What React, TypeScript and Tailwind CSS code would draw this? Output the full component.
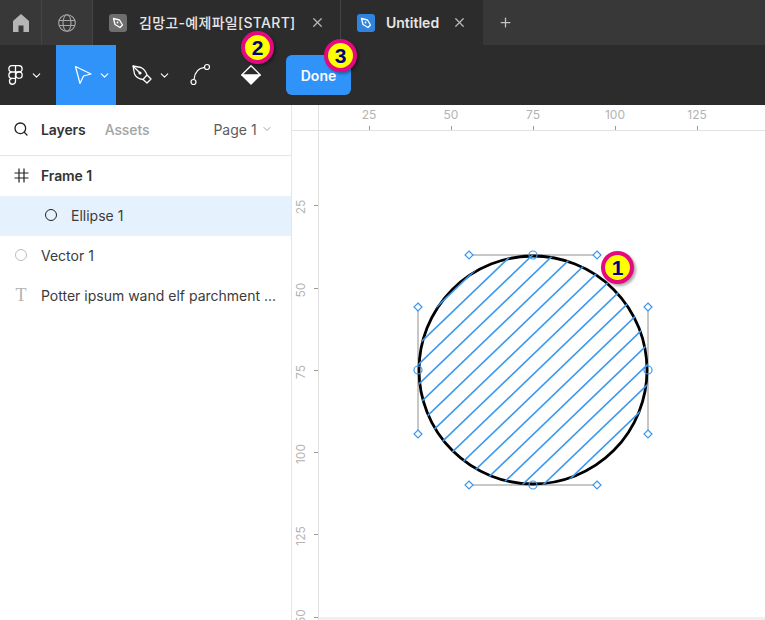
import React from "react";
import { ChevronDown, Plus, Search, X } from "lucide-react";

const sans = "font-['Inter','Noto_Sans_CJK_KR',sans-serif]";

const Badge: React.FC<{ n: number; className: string }> = ({ n, className }) => (
  <div
    className={`absolute z-10 flex h-[33px] w-[33px] items-center justify-center rounded-full border-[4px] border-[#e5097f] bg-[#ffff00] font-['Liberation_Sans',sans-serif] text-[21px] font-bold text-[#000080] shadow-[2px_2px_3px_rgba(0,0,0,0.35)] ${className}`}
  >
    {n}
  </div>
);

const TabIcon: React.FC<{ bg: string }> = ({ bg }) => (
  <span className={`flex h-[18px] w-[18px] items-center justify-center rounded-[3px] ${bg}`}>
    <svg width="14" height="14" viewBox="0 0 14 14" fill="none" stroke="white" strokeWidth="1.3">
      <path d="M2.5 2.5 L8.5 4 L11.5 9 L9 11.5 L4 8.5 Z" strokeLinejoin="round" />
      <circle cx="6.5" cy="6.5" r="0.9" fill="white" stroke="none" />
    </svg>
  </span>
);

const TabBar = () => (
  <div className={`flex h-[45px] bg-[#383838] text-[14px] ${sans}`}>
    <div className="flex w-[42px] items-center justify-center border-r border-[#444]">
      <svg width="16" height="18" viewBox="0 0 16 18" fill="#b5b5b5">
        <path d="M8 0 L16 7 V18 H10.5 V11.5 H5.5 V18 H0 V7 Z" />
      </svg>
    </div>
    <div className="flex w-[50px] items-center justify-center">
      <svg width="18" height="18" viewBox="0 0 18 18" fill="none" stroke="#a8a8a8" strokeWidth="1.1">
        <circle cx="9" cy="9" r="8.3" />
        <ellipse cx="9" cy="9" rx="4" ry="8.3" />
        <path d="M1 6.5H17M1 11.5H17" />
      </svg>
    </div>
    <div className="flex w-[249px] items-center border-x border-[#444] bg-[#2c2c2c] pl-4 text-[#e6e6e6]">
      <TabIcon bg="bg-[#6e6e6e]" />
      <span className="ml-3 font-medium tracking-[0.3px]">김망고-예제파일[START]</span>
      <X size={15} className="ml-[14px] text-[#b8b8b8]" />
    </div>
    <div className="flex w-[142px] items-center bg-[#2c2c2c] pl-4 text-[#e6e6e6]">
      <TabIcon bg="bg-[#2f84e0]" />
      <span className="ml-[11px] font-semibold">Untitled</span>
      <X size={15} className="ml-[13px] text-[#b8b8b8]" />
    </div>
    <div className="flex w-[44px] items-center justify-center">
      <Plus size={15} className="text-[#c4c4c4]" />
    </div>
  </div>
);

const Toolbar = () => (
  <div className="flex h-[60px] items-center bg-[#2c2c2c] text-white">
    <div className="flex w-[56px] items-center pl-2">
      <svg width="15" height="20" viewBox="0 0 15 20" fill="none" stroke="white" strokeWidth="1.3">
        <path d="M7.5 0.7H4a3 3 0 0 0 0 6.3H7.5ZM7.5 0.7H11a3 3 0 0 1 0 6.3H7.5ZM7.5 7H4a3 3 0 0 0 0 6.3H7.5ZM7.5 13.3H4a3 3 0 1 0 3.5 3Z" />
        <circle cx="11" cy="10.1" r="3.2" />
      </svg>
      <ChevronDown size={13} className="ml-[7px]" />
    </div>
    <div className="flex h-full w-[60px] items-center bg-[#3093fa] pl-[17px]">
      <svg width="20" height="20" viewBox="0 0 20 20" fill="none" stroke="white" strokeWidth="1.2">
        <path d="M2.5 1.5 L18 9 L10.5 11 L7 18.5 Z" strokeLinejoin="round" />
      </svg>
      <ChevronDown size={13} className="ml-[5px]" />
    </div>
    <div className="flex w-[70px] items-center pl-[15px]">
      <svg width="22" height="22" viewBox="0 0 22 22" fill="none" stroke="white" strokeWidth="1.3">
        <path d="M2 2 L10 3.5 C13 5 15 8 16 11 L20 15 L16 19 L12 15.5 C8 15 5 13 3.5 10 Z" strokeLinejoin="round" />
        <path d="M2 2 L8.5 8.5M12 15.5 L16 11" />
        <circle cx="9" cy="9" r="1.6" fill="white" stroke="none" />
      </svg>
      <ChevronDown size={13} className="ml-[5px]" />
    </div>
    <svg width="24" height="24" viewBox="0 0 24 24" fill="none" stroke="white" strokeWidth="1.2" className="ml-[4px]">
      <path d="M4 16.5 C4.5 10 8 5 14.7 4.3" />
      <circle cx="3.5" cy="19" r="2.5" />
      <circle cx="17" cy="4" r="2.5" />
    </svg>
    <svg width="20" height="20" viewBox="0 0 20 20" className="ml-[27px]">
      <path d="M10 0.7 L19.3 10 L0.7 10 Z" fill="none" stroke="white" strokeWidth="1.3" strokeLinejoin="round" />
      <path d="M0 10 L20 10 L10 20 Z" fill="white" />
    </svg>
    <button className={`ml-[25px] h-10 w-[65px] rounded-md bg-[#3093fa] text-[14px] font-semibold text-white ${sans}`}>
      Done
    </button>
  </div>
);

const Row: React.FC<{ icon: React.ReactNode; label: string; className?: string }> = ({
  icon,
  label,
  className = "pl-[11px]",
}) => (
  <div className={`flex h-10 items-center pb-[2px] ${className}`}>
    <span className="flex w-[20px] justify-center">{icon}</span>
    <span className="ml-[10px] whitespace-nowrap">{label}</span>
  </div>
);

const LayersPanel = () => (
  <aside className={`h-full w-[292px] shrink-0 border-r border-[#e6e6e6] bg-white text-[14px] text-[#3b3b3b] ${sans}`}>
    <div className="flex h-[51px] items-center border-b border-[#e5e5e5] pb-[2px] pl-[13px]">
      <Search size={16} className="text-[#222]" strokeWidth={2} />
      <span className="ml-3 font-semibold tracking-[-0.1px] text-[#333]">Layers</span>
      <span className="ml-[19px] font-medium tracking-[-0.1px] text-[#a3a3a3]">Assets</span>
      <span className="ml-[64px] text-[#5c5c5c]">Page 1</span>
      <ChevronDown size={12} className="ml-[4px] text-[#a3a3a3]" />
    </div>
    <Row
      label="Frame 1"
      className="pl-[11px] font-semibold tracking-[-0.1px] text-[#333]"
      icon={
        <svg width="15" height="15" viewBox="0 0 15 15" fill="none" stroke="#222" strokeWidth="1.2">
          <path d="M0.5 5H14.5M0.5 10H14.5M5 0.5V14.5M10 0.5V14.5" />
        </svg>
      }
    />
    <Row
      label="Ellipse 1"
      className="bg-[#e5f2fe] pl-[41px]"
      icon={<span className="h-[12px] w-[12px] rounded-full border-[1.5px] border-[#222]" />}
    />
    <Row label="Vector 1" icon={<span className="h-[12px] w-[12px] rounded-full border-[1.5px] border-[#bdbdbd]" />} />
    <Row
      label="Potter ipsum wand elf parchment ..."
      icon={<span className="font-['Liberation_Serif',serif] text-[18px] leading-none text-[#b3b3b3]">T</span>}
    />
  </aside>
);

const xTicks = [
  [77, "25"],
  [159, "50"],
  [241, "75"],
  [323, "100"],
  [405, "125"],
] as const;
const yTicks = [
  [74, "25"],
  [157, "50"],
  [239, "75"],
  [321, "100"],
  [403, "125"],
  [486, "150"],
] as const;

const diamonds = [
  [469, 255],
  [597, 255],
  [418, 307],
  [648, 307],
  [418, 434],
  [648, 434],
  [469, 485],
  [597, 485],
];

// hatch lines sit 20px apart vertically
const hatch = Array.from({ length: 24 }, (_, i) => 283 + i * 20);

const Shape = () => (
  <svg viewBox="319 131 446 486" className="h-full w-full" fill="none">
    <defs>
      <clipPath id="circle">
        <circle cx="533" cy="370" r="115" />
      </clipPath>
    </defs>
    <path d="M469 255H597M469 485H597M418 307V434M648 307V434" stroke="#b5b5b5" strokeWidth="1.5" />
    <circle cx="533" cy="370" r="114" stroke="#000" strokeWidth="2.8" />
    <g clipPath="url(#circle)" stroke="#3c98ee" strokeWidth="1.6">
      {hatch.map((y) => (
        <line key={y} x1={400} y1={y + 19.2} x2={670} y2={y - 240} />
      ))}
    </g>
    <g stroke="#3c98ee" strokeWidth="1.2">
      {diamonds.map(([x, y]) => (
        <path key={`${x}-${y}`} fill="white" d={`M${x} ${y - 4}L${x + 4} ${y}L${x} ${y + 4}L${x - 4} ${y}Z`} />
      ))}
      <circle cx="533" cy="255" r="4" />
      <circle cx="533" cy="485" r="4" />
      <circle cx="418" cy="370" r="4" />
      <circle cx="648" cy="370" r="4" />
    </g>
  </svg>
);

const CanvasPane = () => (
  <div className={`flex min-w-0 flex-1 flex-col text-[12px] text-[#b3b3b3] ${sans}`}>
    <div className="relative h-[26px] shrink-0 border-b border-[#e2e2e2]">
      {xTicks.map(([x, t]) => (
        <React.Fragment key={t}>
          <span className="absolute top-[1px] w-10 -translate-x-1/2 text-center" style={{ left: x }}>
            {t}
          </span>
          <span className="absolute top-[21px] h-1 w-px bg-[#999]" style={{ left: x }} />
        </React.Fragment>
      ))}
      <span className="absolute bottom-0 left-[26px] top-0 w-px bg-[#e2e2e2]" />
    </div>
    <div className="flex min-h-0 flex-1">
      <div className="relative w-[27px] shrink-0 overflow-hidden border-r border-[#e2e2e2]">
        {yTicks.map(([y, t]) => (
          <React.Fragment key={t}>
            <span
              className="absolute left-[1px] w-10 origin-top-left -rotate-90 text-center leading-[16px]"
              style={{ top: y + 22 }}
            >
              {t}
            </span>
            <span className="absolute left-[22px] h-px w-1 bg-[#999]" style={{ top: y }} />
          </React.Fragment>
        ))}
      </div>
      <div className="relative flex min-w-0 flex-1 flex-col">
        <div className="min-h-0 flex-1">
          <Shape />
        </div>
        <div className="h-[3px] shrink-0 bg-[#f0f0f0]" />
        <Badge n={1} className="left-[282px] top-[120px]" />
      </div>
    </div>
  </div>
);

export default function App() {
  return (
    <div className="relative flex h-[620px] w-[765px] flex-col overflow-hidden bg-white">
      <TabBar />
      <Toolbar />
      <div className="flex min-h-0 flex-1">
        <LayersPanel />
        <CanvasPane />
      </div>
      <Badge n={2} className="left-[241px] top-[31px]" />
      <Badge n={3} className="left-[324px] top-[39px]" />
    </div>
  );
}
